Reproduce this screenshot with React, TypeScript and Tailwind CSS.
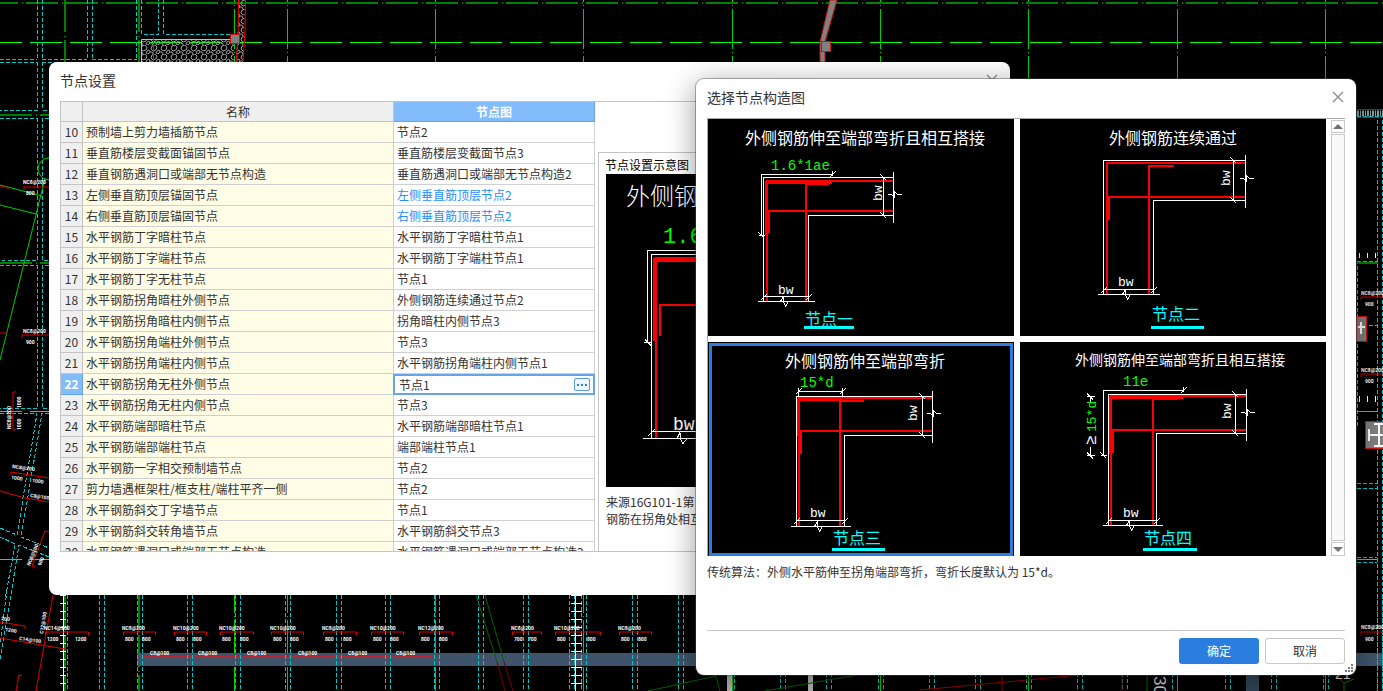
import { useState } from 'react'

const rows = [
    { id: 10, name: '预制墙上剪力墙插筋节点', node: '节点2' },
    { id: 11, name: '垂直筋楼层变截面锚固节点', node: '垂直筋楼层变截面节点3' },
    { id: 12, name: '垂直钢筋遇洞口或端部无节点构造', node: '垂直筋遇洞口或端部无节点构造2' },
    { id: 13, name: '左侧垂直筋顶层锚固节点', node: '左侧垂直筋顶层节点2', changed: true },
    { id: 14, name: '右侧垂直筋顶层锚固节点', node: '右侧垂直筋顶层节点2', changed: true },
    { id: 15, name: '水平钢筋丁字暗柱节点', node: '水平钢筋丁字暗柱节点1' },
    { id: 16, name: '水平钢筋丁字端柱节点', node: '水平钢筋丁字端柱节点1' },
    { id: 17, name: '水平钢筋丁字无柱节点', node: '节点1' },
    { id: 18, name: '水平钢筋拐角暗柱外侧节点', node: '外侧钢筋连续通过节点2' },
    { id: 19, name: '水平钢筋拐角暗柱内侧节点', node: '拐角暗柱内侧节点3' },
    { id: 20, name: '水平钢筋拐角端柱外侧节点', node: '节点3' },
    { id: 21, name: '水平钢筋拐角端柱内侧节点', node: '水平钢筋拐角端柱内侧节点1' },
    { id: 22, name: '水平钢筋拐角无柱外侧节点', node: '节点1' },
    { id: 23, name: '水平钢筋拐角无柱内侧节点', node: '节点3' },
    { id: 24, name: '水平钢筋端部暗柱节点', node: '水平钢筋端部暗柱节点1' },
    { id: 25, name: '水平钢筋端部端柱节点', node: '端部端柱节点1' },
    { id: 26, name: '水平钢筋一字相交预制墙节点', node: '节点2' },
    { id: 27, name: '剪力墙遇框架柱/框支柱/端柱平齐一侧', node: '节点2' },
    { id: 28, name: '水平钢筋斜交丁字墙节点', node: '节点1' },
    { id: 29, name: '水平钢筋斜交转角墙节点', node: '水平钢筋斜交节点3' },
    { id: 30, name: '水平钢筋遇洞口或端部无节点构造', node: '水平钢筋遇洞口或端部无节点构造2' },
]

const ACTIVE_ROW = 22

type Detail = {
    label: string
    title: string
    titleX: number
    titleSize: number
    // outer wall corner, cut-off right edge and bottom edge
    x: number
    y: number
    right: number
    bottom: number
    // inner wall corner
    ix: number
    iy: number
    // rebar: outer bar, inner bar and the bends at their ends
    rx: number
    ry: number
    jx: number
    jy: number
    hookX: number
    hookY: number
    thickX?: number
    thickY?: number
    dimX: number
    dimY: number
    textX: number
    textY: number
    sideX: number
    sideY: number
    breakX: number
    breakY: number
    labelX: number
    labelY: number
    lineY: number
    lineEnd: number
    // lap dimension: corner and the two end points
    lap?: { x: number; y: number; x2: number; y2?: number; text: string; tx: number; ty: number }
    anchor?: boolean
}

const details: Detail[] = [
    {
        label: '节点一', title: '外侧钢筋伸至端部弯折且相互搭接', titleX: 37, titleSize: 16,
        x: 55.5, y: 58.5, right: 185.5, bottom: 182.5, ix: 100.5, iy: 96.5,
        rx: 59, ry: 62, jx: 98, jy: 92, hookX: 121, hookY: 114, thickX: 124, thickY: 116,
        dimX: 175.5, dimY: 177.5, textX: 70, textY: 175, sideX: 174, sideY: 82, breakX: 75.5, breakY: 75.5,
        labelX: 97, labelY: 206, lineY: 207, lineEnd: 146,
        lap: { x: 53.5, y: 55.5, x2: 124.5, y2: 116.5, text: '1.6*1ae', tx: 63, ty: 51 },
    },
    {
        label: '节点二', title: '外侧钢筋连续通过', titleX: 89, titleSize: 16,
        x: 83.5, y: 41.5, right: 225.5, bottom: 175.5, ix: 133.5, iy: 81.5,
        rx: 87, ry: 44, jx: 129, jy: 78, hookX: 154, hookY: 101,
        dimX: 213.5, dimY: 170.5, textX: 98, textY: 167, sideX: 210, sideY: 67, breakX: 105.5, breakY: 59.5,
        labelX: 132, labelY: 201, lineY: 207, lineEnd: 184,
    },
    {
        label: '节点三', title: '外侧钢筋伸至端部弯折', titleX: 77, titleSize: 16,
        x: 88.5, y: 54.5, right: 224.5, bottom: 184.5, ix: 136.5, iy: 93.5,
        rx: 91, ry: 56, jx: 132, jy: 89, hookX: 156, hookY: 112, thickX: 134, thickY: 94,
        dimX: 214.5, dimY: 178.5, textX: 102, textY: 175, sideX: 209, sideY: 79, breakX: 109.5, breakY: 71.5,
        labelX: 125, labelY: 202, lineY: 206, lineEnd: 177,
        lap: { x: 90.5, y: 49.5, x2: 134.5, text: '15*d', tx: 92, ty: 45 },
    },
    {
        label: '节点四', title: '外侧钢筋伸至端部弯折且相互搭接', titleX: 55, titleSize: 14,
        x: 88.5, y: 52.5, right: 226.5, bottom: 183.5, ix: 136.5, iy: 91.5,
        rx: 91, ry: 54, jx: 133, jy: 88, hookX: 157, hookY: 111, thickX: 163, thickY: 112,
        dimX: 215.5, dimY: 178.5, textX: 103, textY: 175, sideX: 211, sideY: 77, breakX: 109.5, breakY: 70.5,
        labelX: 124, labelY: 202, lineY: 206, lineEnd: 177,
        lap: { x: 83.5, y: 48.5, x2: 163.5, y2: 113.5, text: '11e', tx: 103, ty: 44 },
        anchor: true,
    },
]

const tick = (x: number, y: number, flip = false) =>
    flip ? `M${x - 3} ${y - 3}l6 6` : `M${x - 3} ${y + 3}l6 -6`

function DetailDrawing({ d }: { d: Detail }) {
    const { lap } = d
    return (
        <svg viewBox="0 0 306 217" className="block h-[217px] w-full bg-black" shapeRendering="crispEdges">
            <g fill="none" stroke="#ff0000" strokeWidth="2">
                <path d={`M${d.right} ${d.ry}H${d.rx}V${d.bottom}`} />
                <path d={`M${d.right} ${d.jy}H${d.rx + 2}V${d.hookY}`} />
                <path d={`M${d.hookX} ${d.ry + 3}H${d.jx}V${d.bottom}`} />
                {d.thickX && <path d={`M${d.thickX} ${d.ry + 1}H${d.rx - 1}V${d.thickY}`} strokeWidth="3" />}
            </g>
            <g fill="none" stroke="#ffffff">
                <path d={`M${d.right} ${d.y}H${d.x}V${d.bottom}`} />
                <path d={`M${d.right} ${d.iy}H${d.ix}V${d.bottom}`} />
                <path d={`M${d.right} ${d.y - 6}V${d.iy + 7}M${d.dimX} ${d.y}V${d.iy}`} />
                <path d={tick(d.dimX, d.y, true) + tick(d.dimX, d.iy, true)} />
                <path d={`M${d.right - 6} ${d.breakY}h4l3 3v-6l3 3h4`} />
                <path d={`M${d.x - 6} ${d.bottom}H${d.ix + 6}M${d.x} ${d.dimY}H${d.ix}`} />
                <path d={tick(d.x, d.dimY + 1) + tick(d.ix, d.dimY + 1)} />
                <path d={`M${d.breakX - 3} ${d.bottom}l3 -5v5l2 5l3 -5`} />
                {lap && <path d={`M${lap.x2} ${lap.y}H${lap.x}V${lap.y2 ?? d.y}`} />}
                {lap && <path d={tick(lap.x2, lap.y) + `M${lap.x2} ${lap.y - 4}v${lap.y2 ? 5 : 8}`} />}
                {lap?.y2 && <path d={tick(lap.x, lap.y2, true) + `M${lap.x - 3} ${lap.y2}h6`} />}
                {lap && !lap.y2 && <path d={tick(lap.x, lap.y) + `M${lap.x} ${lap.y - 4}v5`} />}
                {d.anchor && (
                    <path d="M70.5 54.5v5M67 54.5h8M67 51.5l6 6M70.5 105v8M67 113.5h8M67 110.5l6 6" />
                )}
            </g>
            <g fill="#ffffff" fontSize="13" className="font-['Liberation_Mono','Noto_Sans_CJK_SC',monospace]">
                <text
                    x={d.titleX}
                    y={d.titleSize === 16 ? 25 : 23}
                    fontSize={d.titleSize}
                    className="font-['Noto_Sans_CJK_SC',sans-serif]"
                >
                    {d.title}
                </text>
                <text x={d.textX} y={d.textY}>bw</text>
                <text transform={`translate(${d.sideX} ${d.sideY}) rotate(-90)`}>bw</text>
                {lap && <text x={lap.tx} y={lap.ty} fontSize="14" fill="#00ff00">{lap.text}</text>}
                {d.anchor && (
                    <>
                        <text fill="#00ff00" transform="translate(76 90) rotate(-90)">15*d</text>
                        <text fontSize="16" transform="translate(76 103) rotate(-90)">≥</text>
                    </>
                )}
            </g>
            <g fill="#00ffff" className="font-['Noto_Sans_CJK_SC',sans-serif]">
                <text x={d.labelX} y={d.labelY} fontSize="16">{d.label}</text>
                <rect x={d.labelX - 1} y={d.lineY} width={d.lineEnd - d.labelX + 1} height="3" />
            </g>
        </svg>
    )
}

function PreviewDrawing() {
    return (
        <svg viewBox="0 0 393 313" className="block h-[313px] w-[393px] bg-black" shapeRendering="crispEdges">
            <g fill="none" stroke="#ff0000">
                <path d="M240 86H49V167" strokeWidth="4" />
                <path d="M240 84H50V264M240 131H54V162" strokeWidth="2" />
            </g>
            <g fill="none" stroke="#ffffff">
                <path d="M150 76.5H41.5V168M240 80.5H45.5V264" />
                <path d="M38 168.5h7M39 165.5l6 6M45 257.5h66M37 264.5h84M42 262l7 -7" />
                <path d="M71 264.5l3 -6v6l3 5l4 -5" />
            </g>
            <text x="20" y="31" fontSize="24" fill="#ffffff" className="font-['Noto_Sans_CJK_SC',sans-serif] font-light">
                外侧钢筋伸至端部弯折
            </text>
            <g className="font-['Liberation_Mono',monospace]">
                <text x="57" y="69" fontSize="22" fill="#00ff00">1.6*1ae</text>
                <text x="67" y="256" fontSize="18" fill="#ffffff">bw</text>
            </g>
        </svg>
    )
}

const gridX = [234, 287, 435, 583, 732, 880, 1028, 1177, 1325]
const wallX = [
    99, 137, 187, 235, 285, 336, 385, 434, 478, 523, 569, 581, 632, 678, 729, 780, 826, 878, 929, 975, 1026, 1077, 1122,
    1172, 1225, 1271, 1323, 1377,
]
const topBars = [
    { x: 45, w: 43, label: 'NC14@200', size: '1200' },
    { x: 123, w: 32, label: 'NC8@200', size: '800' },
    { x: 174, w: 32, label: 'NC10@200', size: '800' },
    { x: 220, w: 33, label: 'NC10@200', size: '800' },
    { x: 271, w: 32, label: 'NC10@200', size: '800' },
    { x: 323, w: 33, label: 'NC8@200', size: '800' },
    { x: 371, w: 32, label: 'NC10@200', size: '800' },
    { x: 419, w: 33, label: 'NC12@200', size: '800' },
    { x: 512, w: 29, label: 'NC8@200', size: '700' },
    { x: 555, w: 45, label: 'NC10@200', size: '800' },
    { x: 619, w: 32, label: 'NC8@200', size: '800' },
]
const bandBars = [150, 198, 247, 298, 348, 396]

function Bar({ x, y, w, label, size }: { x: number; y: number; w: number; label: string; size: string }) {
    return (
        <g>
            <path d={`M${x + 0.5} ${y + 3}v-3h${w}v3`} fill="none" stroke="#e00000" />
            <text x={x - 1} y={y - 2}>{label}</text>
            <text x={x + 2} y={y + 9}>{size}</text>
            <text x={x + w - 13} y={y + 9}>{size}</text>
        </g>
    )
}

function FloorPlan() {
    return (
        <svg
            viewBox="0 0 1383 691"
            preserveAspectRatio="xMinYMin slice"
            className="absolute inset-0 h-full w-full"
            aria-hidden="true"
        >
            <defs>
                <pattern id="gravel" width="10" height="9" patternUnits="userSpaceOnUse">
                    <path
                        d="M2 1l3 -1l2 2l-1 3l-3 1l-2 -2zM7 6l2 -1l1 2l-2 2l-2 -1zM0 7l2 0l1 2"
                        fill="none"
                        stroke="#9a9a9a"
                    />
                </pattern>
            </defs>
            <g fill="none" shapeRendering="crispEdges">
                {/* axis grid */}
                <g stroke="#008000" strokeWidth="2" strokeDasharray="32 4 1 3">
                    <path d="M0 3H1383" strokeDashoffset="14" />
                    <path d="M65 0V62M139 0V62" />
                    <path d="M0 115H49M0 263H49M1357 263H1378" />
                    <path d="M139 595V691M65 595V691" />
                </g>
                <path
                    d="M0 42.5H1383M0 411.5H49M0 559.5H49M1357 411.5H1378M1357 559.5H1378"
                    stroke="#00ff00"
                    strokeDasharray="32 8"
                    strokeDashoffset="10"
                />
                {gridX.map((x) => (
                    <path
                        key={x}
                        d={`M${x + 0.5} 0V691`}
                        stroke="#00d000"
                        strokeDasharray="40 3 1 3"
                        strokeDashoffset="38"
                    />
                ))}
                {/* slab band */}
                <rect x="137" y="653" width="1246" height="13" fill="#3f546b" />
                <rect x="1246" y="675" width="13" height="16" fill="#34465a" />
                <path d="M139 657H435" stroke="#b02a35" strokeWidth="2" />
                {/* walls */}
                <g stroke="#00c8c8" strokeDasharray="4 2">
                    <path d="M37.5 0V59M42.5 0V59M87.5 0V59M92.5 0V59M136.5 0V59M0 59.5H37M42 59.5H87M92 59.5H137M0 62.5H37M42 62.5H137" />
                    <path d="M141.5 0V34H158.5V0M163.5 0V34H234" />
                    <path d="M37.5 62V110H0M42.5 62V110H49M0 118.5H37V260H0M49 118.5H42V260H49M0 265.5H37V408H0M49 265.5H42V408H49" />
                    <path d="M0 413.5H37L17 535L0 528M49 413.5H42L21 537L49 548M0 537L15 544L5 600M49 557L19 545L10 600" />
                    <path d="M1357 116.5H1383M1377.5 120V691M1382.5 120V691M1357 261.5H1377M1357 265.5V426M1357 325.5H1377M1357 483.5H1377M1357 488.5H1377M1357 557.5H1377M1357 562.5H1377" />
                    <path d="M7 590L-2 660M12 590L0 660M63.5 595V691M67.5 595V691" />
                    {wallX.map((x) => (
                        <path key={x} d={`M${x + 0.5} 595V691M${x + 5.5} 595V691`} />
                    ))}
                </g>
                {/* ladders */}
                <g stroke="#ffffff">
                    <path d="M63.5 595V691M575.5 595V691" />
                    <path d="M63 595V691" strokeWidth="6" strokeDasharray="1 7" />
                    <path d="M576 595V691" strokeWidth="11" strokeDasharray="1 7" />
                </g>
                <path d="M729 675V691M810 675V691" stroke="#b8b8b8" strokeWidth="5" />
            </g>
            {/* gravel infill */}
            <path d="M142 39H234V62H142zM239 0H245L243 62H236z" fill="url(#gravel)" />
            <path d="M141.5 62V39.5H230" fill="none" stroke="#d8d800" />
            <path d="M153.5 37V62M238.5 0L238 40L236 62M245.5 0L245 30L243 62" fill="none" stroke="#ff0000" />
            <rect x="230.5" y="34.5" width="9" height="9" fill="#808080" stroke="#d01010" />
            <path d="M830 0L820 42V62H825V42L837 0z" fill="#808080" stroke="#d01010" />
            <rect x="821.5" y="41.5" width="9" height="10" fill="#808080" stroke="#d01010" />
            {/* sloped bars and axes */}
            <g fill="none" stroke="#00d000">
                <path d="M0 185L42 196M0 205L36 214M45 178L36 215L0 360" />
                <circle cx="49" cy="169" r="11" />
            </g>
            <path d="M476 595L497 662M485 595L504 662M648 691L716 676L720 691M765 691L857 675" fill="none" stroke="#006400" />
            <path d="M497 662L505 691M504 662L513 691" fill="none" stroke="#7a0000" />
            <path d="M920 690L1080 675M1002 675V691M1122 675V691" fill="none" stroke="#a00000" />
            <path d="M1335 675l9 8l10 -4M1344 683V691M1147 675V691" fill="none" stroke="#007000" />
            <g fill="none" stroke="#e00000">
                <path d="M53 595L36 691M0 638L65 649M0 622L25 626V629M22 676L19 675L16 691" />
                <path d="M0 491L25 498L49 502M11 472V475M11 472L49 478M13 392V430M13 392h3M13 430h3M49 532L45 531L32 566L35 567" />
                <path d="M0 187h8v3M24 190v-3h25M22 338v-3h27M0 333h7" />
                <path d="M1361 300v-3h22M1361 377v-3h22M1361 635v-3h22" />
            </g>
            {/* packed tags along the upper right wall */}
            <path d="M1357 113.5H1383" stroke="#7fa8a8" strokeWidth="6" strokeDasharray="2 1 1 1" />
            <path d="M1357 109.5H1383M1357 117.5H1383" stroke="#c01010" />
            <g fill="#808080" stroke="#d01010">
                <rect x="1356.5" y="316.5" width="10" height="25" />
                <rect x="1365.5" y="421.5" width="22" height="27" />
            </g>
            <path d="M1369 429v12M1369 435h14M1374 424h9M1374 446h9M1379 424v22M1358 327h7M1361 322v12" fill="none" stroke="#ffffff" strokeWidth="2" />
            <path d="M1359.5 253v5M1367.5 253v5M1375.5 253v5M1359.5 396v6M1367.5 396v6M1375.5 396v6" stroke="#ffffff" />
            <g fill="#ffffff" fontSize="5" className="font-['Roboto','Liberation_Sans',sans-serif] font-bold">
                {topBars.map((bar) => (
                    <Bar key={bar.x} {...bar} y={632} />
                ))}
                {bandBars.map((x) => (
                    <text key={x} x={x} y="655">C8@100</text>
                ))}
                <text x="23" y="184">NC8@200</text>
                <text x="26" y="195">800</text>
                <text x="23" y="333">NC8@200</text>
                <text x="26" y="344">900</text>
                <text transform="translate(11 429) rotate(-90)">NC8@200</text>
                <text transform="translate(21 408) rotate(-90)">1000</text>
                <text transform="translate(21 430) rotate(-90)">1000</text>
                <text transform="translate(12 468) rotate(8)">NC8@200</text>
                <text transform="translate(11 479) rotate(8)">1000</text>
                <text transform="translate(32 482) rotate(8)">1000</text>
                <text transform="translate(30 497) rotate(8)">C8@100</text>
                <text transform="translate(30 566) rotate(-68)">NC8@200</text>
                <text transform="translate(41 566) rotate(-68)">900</text>
                <text transform="translate(19 640) rotate(8)">C14@100</text>
                <text transform="translate(43 634) rotate(-80)">C12@100</text>
                <text transform="translate(5 631) rotate(10)">1200</text>
                <text transform="translate(1 620) rotate(8)">200</text>
                <text x="1361" y="295">NC8@200</text>
                <text x="1365" y="306">900</text>
                <text x="1361" y="372">NC8@200</text>
                <text x="1365" y="383">900</text>
                <text x="1361" y="629">NC8@200</text>
                <text x="1365" y="641">900</text>
            </g>
            <g fill="#d8d8d8" fontSize="17" className="font-['Liberation_Sans',sans-serif]">
                <text transform="translate(1154 676) rotate(90)">30</text>
                <text x="1335" y="679" fontSize="14">21</text>
            </g>
        </svg>
    )
}

function TitleBar({ title }: { title: string }) {
    return (
        <header className="flex h-[39px] shrink-0 items-center justify-between pb-[3px]">
            <h2 className="text-sm">{title}</h2>
            <button
                type="button"
                aria-label="关闭"
                className="-mr-[3px] flex size-5 items-center justify-center text-[#8a8a8a]"
            >
                <svg viewBox="0 0 12 12" className="size-3" fill="none" stroke="currentColor" strokeWidth="1.3">
                    <path d="M1 1l10 10M11 1L1 11" />
                </svg>
            </button>
        </header>
    )
}

function NodeTable() {
    const [value, setValue] = useState('节点1')

    return (
        <table className="w-[535px] shrink-0 table-fixed border-separate border-spacing-0 self-start border-l border-[#c4c4c4] text-xs leading-4">
            <colgroup>
                <col className="w-[22px]" />
                <col className="w-[311px]" />
                <col className="w-[201px]" />
            </colgroup>
            <thead>
                <tr className="h-5">
                    <th className="border-r border-b border-[#c4c4c4] bg-[#efefef] p-0" />
                    <th className="border-r border-b border-[#c4c4c4] bg-[#efefef] p-0 font-normal">名称</th>
                    <th className="border-r border-b border-[#65a4e8] bg-[#83bcfb] p-0 font-bold text-white">节点图</th>
                </tr>
            </thead>
            <tbody>
                {rows.map((row) => {
                    const active = row.id === ACTIVE_ROW
                    return (
                        <tr key={row.id} className="h-[21px]">
                            <th
                                scope="row"
                                className={
                                    active
                                        ? 'border-r border-b border-[#65a4e8] bg-[#83bcfb] p-0 font-bold text-white'
                                        : 'border-r border-b border-[#c4c4c4] bg-[#efefef] p-0 font-normal'
                                }
                            >
                                {row.id}
                            </th>
                            <td className="border-r border-b border-[#d0d0d0] bg-[#fffde6] py-0 pr-0 pl-[3px] whitespace-nowrap">
                                {row.name}
                            </td>
                            {active ? (
                                <td className="p-0">
                                    <div className="-ml-px flex h-[21px] items-center border-2 border-[#65a4e8] bg-white pr-[3px] pl-1">
                                        <input
                                            aria-label={row.name}
                                            value={value}
                                            onChange={(e) => setValue(e.target.value)}
                                            className="h-4 min-w-0 flex-1 outline-none"
                                        />
                                        <button
                                            type="button"
                                            aria-label="选择节点构造图"
                                            className="flex h-[13px] w-4 items-center justify-center gap-[2px] rounded-[2px] border border-[#5b9ae2] bg-[#edf5fe]"
                                        >
                                            <span className="size-[2px] bg-[#2b7de0]" />
                                            <span className="size-[2px] bg-[#2b7de0]" />
                                            <span className="size-[2px] bg-[#2b7de0]" />
                                        </button>
                                    </div>
                                </td>
                            ) : (
                                <td
                                    className={
                                        row.changed
                                            ? 'border-r border-b border-[#d0d0d0] py-0 pr-0 pl-[3px] whitespace-nowrap text-[#1e8fff]'
                                            : 'border-r border-b border-[#d0d0d0] py-0 pr-0 pl-[3px] whitespace-nowrap'
                                    }
                                >
                                    {row.node}
                                </td>
                            )}
                        </tr>
                    )
                })}
            </tbody>
        </table>
    )
}

function SettingsWindow() {
    return (
        <section className="absolute top-[62px] left-[49px] w-[961px] rounded-lg bg-white px-[11px] pb-[43px] text-[#333333]">
            <TitleBar title="节点设置" />
            <div className="flex h-[451px] gap-[3px] overflow-hidden border-y border-[#c4c4c4]">
                <NodeTable />
                <div className="mt-[50px] flex-1 border-t border-l border-[#c4c4c4] pl-[7px]">
                    <h3 className="-ml-px h-[21px] pt-1 text-xs leading-4 text-black">节点设置示意图</h3>
                    <PreviewDrawing />
                    <p className="pt-[6px] text-xs leading-[17px]">
                        来源16G101-1第
                        <br />
                        钢筋在拐角处相互
                    </p>
                </div>
            </div>
        </section>
    )
}

function ScrollBar() {
    return (
        <div className="flex w-[14px] flex-col gap-px pt-px">
            <button type="button" aria-label="向上滚动" className="flex h-[13px] items-center justify-center border border-[#c8c8c8]">
                <svg viewBox="0 0 10 5" className="h-[5px] w-[10px]" fill="#737373"><path d="M0 5L5 0l5 5z" /></svg>
            </button>
            <div className="flex-1 border border-[#c8c8c8] bg-[#f9f9f9]" />
            <button type="button" aria-label="向下滚动" className="flex h-[14px] items-center justify-center border border-[#c8c8c8]">
                <svg viewBox="0 0 10 5" className="h-[5px] w-[10px]" fill="#737373"><path d="M0 0h10L5 5z" /></svg>
            </button>
        </div>
    )
}

function PickerDialog() {
    const [selected, setSelected] = useState(2)

    return (
        <section
            role="dialog"
            aria-label="选择节点构造图"
            className="absolute top-[79px] left-[696px] flex h-[596px] w-[660px] flex-col rounded-lg bg-white px-[11px] text-[#333333] shadow-[0_6px_30px_rgba(0,0,0,0.42),0_0_0_1px_rgba(90,90,90,0.45)]"
        >
            <TitleBar title="选择节点构造图" />
            <div className="flex h-[438px] shrink-0 justify-between overflow-hidden border-t border-l border-[#a8a8a8]">
                <div className="grid w-[618px] auto-rows-[217px] grid-cols-2 gap-[6px]">
                    {details.map((d, i) => (
                        <button
                            key={d.label}
                            type="button"
                            aria-pressed={selected === i}
                            onClick={() => setSelected(i)}
                            className={
                                selected === i
                                    ? 'relative block after:absolute after:inset-x-px after:top-px after:bottom-[3px] after:border-3 after:border-[#2b7de0]'
                                    : 'relative block'
                            }
                        >
                            <DetailDrawing d={d} />
                        </button>
                    ))}
                </div>
                <ScrollBar />
            </div>
            <p className="flex-1 pt-2 text-xs leading-4">传统算法：外侧水平筋伸至拐角端部弯折，弯折长度默认为 15*d。</p>
            <footer className="flex h-[45px] shrink-0 items-start justify-end gap-[6px] border-t border-[#c4c4c4] pt-[7px] text-xs">
                <button type="button" className="h-[26px] w-20 rounded-[3px] bg-[#2b7de0] text-white">确定</button>
                <button type="button" className="h-[26px] w-20 rounded-[3px] border border-[#c8c8c8] bg-white">取消</button>
            </footer>
            <svg viewBox="0 0 8 8" className="absolute right-[3px] bottom-[3px] size-2" fill="#7a7a7a" shapeRendering="crispEdges">
                <path d="M6 0h2v2h-2zM3 3h2v2h-2zM6 3h2v2h-2zM0 6h2v2h-2zM3 6h2v2h-2zM6 6h2v2h-2z" />
            </svg>
        </section>
    )
}

export default function App() {
    return (
        <main className="relative h-screen min-h-[691px] overflow-hidden bg-black font-['Noto_Sans_CJK_SC',sans-serif]">
            <FloorPlan />
            <SettingsWindow />
            <PickerDialog />
        </main>
    )
}
